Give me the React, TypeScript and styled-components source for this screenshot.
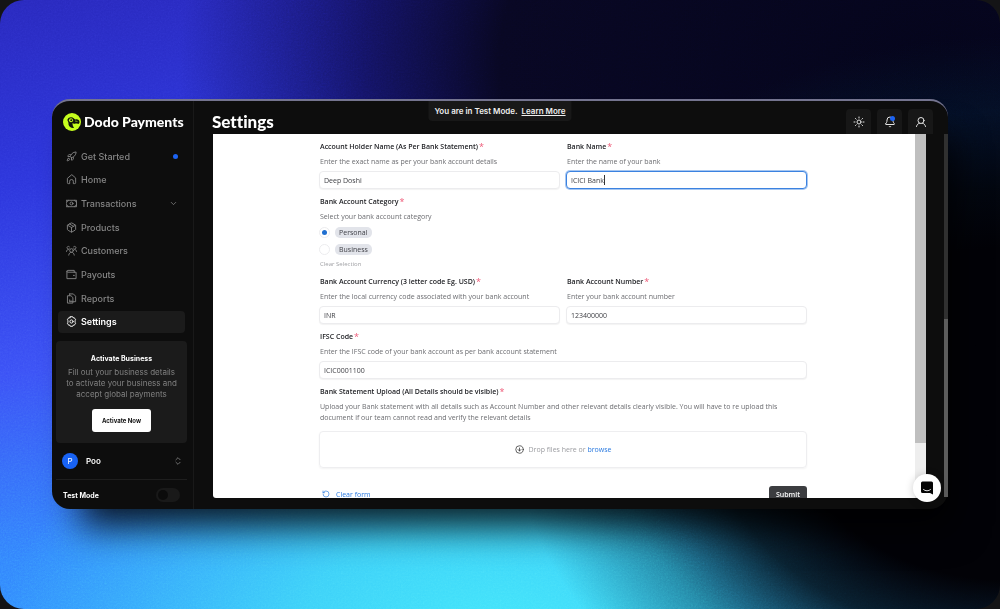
import React from "react";
import styled, { createGlobalStyle, css } from "styled-components";
import { Rocket, Package, ChevronDown, ChevronsUpDown, Sun, Bell, RotateCcw, CircleArrowDown } from "lucide-react";

const ui = `Inter, "Liberation Sans", sans-serif`;
const formFont = `"Open Sans", "Noto Sans", sans-serif`;

const GlobalStyle = createGlobalStyle`
  *, *::before, *::after { box-sizing: border-box; }
  body { margin: 0; background: #141416; font-family: ${ui}; }
  h1, h2, p, ul { margin: 0; padding: 0; }
  ul { list-style: none; }
  button, input { font: inherit; margin: 0; }
  button { cursor: pointer; border: 0; padding: 0; background: none; color: inherit; }
`;

const Wallpaper = styled.div`
  position: relative;
  height: 100vh;
  min-height: 609px;
  display: flex;
  padding: 99px 52px 100px;
  border-radius: 24px;
  overflow: hidden;
  background:
    radial-gradient(ellipse 50% 62% at 101% 68%, #010106 0%, #010106 44%, rgba(1, 6, 12, 0.85) 60%, rgba(2, 30, 50, 0.4) 80%, rgba(2, 40, 60, 0) 100%),
    radial-gradient(ellipse 50% 46% at 50% 104%, #42e6fb 0%, rgba(62, 216, 248, 0.9) 40%, rgba(50, 160, 250, 0) 100%),
    radial-gradient(ellipse 76% 80% at 94% 10%, #04041a 0%, #080722 58%, rgba(14, 12, 74, 0.8) 76%, rgba(34, 34, 170, 0) 100%),
    linear-gradient(172deg, #2828bc 0%, #2c35dc 25%, #3a50f6 50%, #3284fd 75%, #309cff 100%);
`;

const Grain = styled.svg`
  position: absolute;
  inset: 0;
  width: 100%;
  height: 100%;
  opacity: 0.3;
  mix-blend-mode: overlay;
`;

const Window = styled.div`
  position: relative;
  flex: 1;
  min-width: 0;
  display: flex;
  border-radius: 18px;
  border-top: 2px solid #74748f;
  background: #0d0d0d;
  box-shadow: 16px 30px 36px -12px rgba(0, 0, 0, 0.85);
`;

const Sidebar = styled.aside`
  width: 142px;
  flex: none;
  display: flex;
  flex-direction: column;
  padding: 12px 6px 0 4px;
  border-right: 1px solid #191919;
`;

const Brand = styled.a`
  display: flex;
  align-items: center;
  gap: 3px;
  height: 18px;
  padding-left: 7px;
  color: #fff;
  text-decoration: none;
  white-space: nowrap;
  font: 900 14px/18px Lato, sans-serif;
  svg { flex: none; }
`;

const Nav = styled.ul`
  display: flex;
  flex-direction: column;
  justify-content: space-between;
  flex: none;
  height: 188px;
  margin: 14px 2px 0;
`;

const NavLink = styled.a<{ $active?: boolean }>`
  display: flex;
  align-items: center;
  gap: 4px;
  height: 22px;
  padding: 0 7px 0 8px;
  border-radius: 4px;
  text-decoration: none;
  font-size: 9px;
  font-weight: ${(p) => (p.$active ? 600 : 500)};
  color: ${(p) => (p.$active ? "#fff" : "#858585")};
  background: ${(p) => (p.$active ? "#1b1b1b" : "transparent")};
  svg { flex: none; }
`;

const NavText = styled.span`
  flex: 1;
`;

const Dot = styled.span`
  width: 5px;
  height: 5px;
  border-radius: 50%;
  background: #1c63f2;
`;

const PromoCard = styled.section`
  display: flex;
  flex-direction: column;
  align-items: center;
  flex: none;
  margin-top: 8px;
  padding: 12px 8px 11px;
  border-radius: 4px;
  background: #1b1b1b;
  text-align: center;
`;

const PromoTitle = styled.h2`
  font-size: 7px;
  line-height: 11px;
  font-weight: 700;
  color: #fff;
`;

const PromoText = styled.p`
  margin-top: 3px;
  font-size: 8px;
  line-height: 11px;
  color: #808080;
  white-space: nowrap;
`;

const PromoButton = styled.button`
  margin-top: 9px;
  height: 23px;
  padding: 0 10px;
  border-radius: 3px;
  background: #fff;
  color: #111;
  font-size: 6px;
  font-weight: 700;
  white-space: nowrap;
`;

const Account = styled.button`
  display: flex;
  align-items: center;
  gap: 8px;
  height: 36px;
  flex: none;
  padding: 0 4px 0 6px;
  color: #fff;
  font-size: 8px;
  font-weight: 600;
  text-align: left;
`;

const Avatar = styled.span`
  width: 16px;
  height: 16px;
  border-radius: 50%;
  background: #1863f5;
  font-size: 8px;
  line-height: 16px;
  font-weight: 400;
  text-align: center;
`;

const ModeRow = styled.label`
  display: flex;
  align-items: center;
  justify-content: space-between;
  height: 31px;
  flex: none;
  padding: 0 7px;
  border-top: 1px solid #1e1e1e;
  color: #fff;
  font-size: 7px;
  font-weight: 700;
`;

const Toggle = styled.input`
  appearance: none;
  display: flex;
  align-items: center;
  width: 24px;
  height: 14px;
  padding: 0 2px;
  border-radius: 7px;
  background: #191919;
  &::before {
    content: "";
    width: 10px;
    height: 10px;
    border-radius: 50%;
    background: #0b0b0b;
  }
`;

const Main = styled.main`
  flex: 1;
  min-width: 0;
  display: flex;
  flex-direction: column;
  padding: 0 15px 11px 18px;
`;

const Header = styled.header`
  display: flex;
  align-items: flex-end;
  justify-content: space-between;
  height: 33px;
  flex: none;
`;

const Title = styled.h1`
  color: #fff;
  font: 900 17px/24px Lato, sans-serif;
  font-variant-ligatures: none;
`;

const Tools = styled.div`
  display: flex;
  gap: 6px;
`;

const Tool = styled.button`
  position: relative;
  display: grid;
  place-items: center;
  width: 25px;
  height: 25px;
  border-radius: 4px 4px 0 0;
  background: #171717;
  color: #e4e4e4;
`;

const Alert = styled.span`
  position: absolute;
  top: 7px;
  right: 7px;
  width: 5px;
  height: 5px;
  border-radius: 50%;
  background: #1c63f2;
`;

const Banner = styled.div`
  position: absolute;
  top: 0;
  left: 50%;
  transform: translateX(-50%);
  height: 20px;
  padding: 0 6px;
  border-radius: 0 0 4px 4px;
  background: #181818;
  color: #eee;
  font-size: 8px;
  line-height: 20px;
  font-weight: 600;
  white-space: nowrap;
  a { color: inherit; margin-left: 2px; text-underline-offset: 1px; }
`;

const Panel = styled.div`
  flex: 1;
  min-height: 0;
  display: flex;
  margin: 0 7px 0 1px;
  overflow: hidden;
  border-radius: 0 0 0 3px;
  background: #fff;
`;

const PanelBody = styled.div`
  flex: 1;
  min-width: 0;
  overflow: hidden;
  padding: 8px 34px 0 32px;
`;

const PanelTrack = styled.div`
  width: 11px;
  flex: none;
  display: flex;
  align-items: flex-start;
  background: #eee;
  &::before {
    content: "";
    width: 100%;
    height: 85%;
    background: #bfbfbf;
  }
`;

const WindowTrack = styled.div`
  position: absolute;
  top: 33px;
  right: 0;
  bottom: 12px;
  width: 4px;
  display: flex;
  align-items: flex-end;
  background: #303030;
  &::before {
    content: "";
    width: 100%;
    height: 49%;
    background: #5c5c5c;
  }
`;

const Form = styled.form`
  max-width: 488px;
  margin: 0 auto;
  display: flex;
  flex-direction: column;
  gap: 8px;
  color: #38393d;
  font-family: ${formFont};
  font-size: 7px;
`;

const Columns = styled.div`
  display: grid;
  grid-template-columns: 1fr 1fr;
  gap: 6px;
`;

const Field = styled.div`
  display: flex;
  flex-direction: column;
  min-width: 0;
`;

const Group = styled.fieldset`
  display: flex;
  flex-direction: column;
  align-items: flex-start;
  margin: 0;
  padding: 0;
  border: 0;
`;

const labelText = css`
  display: flex;
  padding: 0 0 0 1px;
  font-size: 7px;
  line-height: 10px;
  font-weight: 600;
  color: #222327;
  white-space: nowrap;
`;

const Label = styled.label`
  ${labelText}
`;

const Legend = styled.legend`
  ${labelText}
`;

const Star = styled.span`
  margin-left: 1px;
  color: #ee5a78;
  font-size: 9px;
  line-height: 9px;
  font-weight: 400;
`;

const Hint = styled.p`
  margin: 4px 0;
  padding-left: 1px;
  line-height: 11px;
  color: #6c6d71;
`;

const UploadHint = styled(Hint)`
  margin-bottom: 0;
`;

const InputWrap = styled.div`
  position: relative;
  display: flex;
`;

const Input = styled.input<{ $focused?: boolean }>`
  width: 100%;
  height: 18px;
  padding: 0 4px;
  border: 1px solid ${(p) => (p.$focused ? "#3b82e0" : "#ececee")};
  border-radius: 4px;
  outline: 0;
  background: #fff;
  box-shadow: ${(p) => (p.$focused ? "0 0 0 1px rgba(59, 130, 224, 0.45)" : "0 1px 1px rgba(0, 0, 0, 0.05)")};
  color: #3c3d42;
`;

const Caret = styled.span`
  position: absolute;
  left: 38px;
  top: 4px;
  width: 1px;
  height: 10px;
  background: #333;
`;

const Choice = styled.label`
  display: flex;
  align-items: center;
  gap: 5px;
  height: 12px;
  margin-bottom: 5px;
`;

const Radio = styled.input`
  appearance: none;
  display: grid;
  place-items: center;
  width: 11px;
  height: 11px;
  border: 1px solid #ececee;
  border-radius: 50%;
  background: #fff;
  &:checked::before {
    content: "";
    width: 5px;
    height: 5px;
    border-radius: 50%;
    background: #1f6fd0;
  }
`;

const Pill = styled.span`
  padding: 0 4px;
  border-radius: 5px;
  background: #e2e4ea;
  line-height: 11px;
  color: #3e3f45;
`;

const ClearSelection = styled.button`
  padding-left: 1px;
  line-height: 9px;
  font-size: 6px;
  color: #a0a1a5;
`;

const DropZone = styled.div`
  display: flex;
  align-items: center;
  justify-content: center;
  gap: 5px;
  height: 37px;
  border: 1px solid #eeeef0;
  border-radius: 4px;
  box-shadow: 0 1px 2px rgba(0, 0, 0, 0.05);
  color: #9b9ca0;
  a { color: #2a7ae0; text-decoration: none; }
  svg { color: #333; }
`;

const Actions = styled.div`
  display: flex;
  align-items: center;
  justify-content: space-between;
  margin-top: 10px;
`;

const ClearForm = styled.button`
  display: flex;
  align-items: center;
  gap: 6px;
  padding-left: 3px;
  color: #2a7ae0;
`;

const Submit = styled.button`
  height: 16px;
  padding: 0 7px;
  border-radius: 3px;
  background: #3c3d40;
  color: #fff;
  font-weight: 600;
`;

const ChatButton = styled.button`
  position: absolute;
  right: 7px;
  bottom: 7px;
  display: grid;
  place-items: center;
  width: 28px;
  height: 28px;
  border-radius: 50%;
  background: #fff;
  box-shadow: 0 1px 8px rgba(0, 0, 0, 0.2);
`;

const DodoMark = () => (
  <svg width="18" height="18" viewBox="0 0 36 36" aria-hidden="true">
    <circle cx="18" cy="18" r="18" fill="#c6fe1e" />
    <path d="M9 13c2-5 9-6 13-2 1 1 2 2 3 2 4-1 8 1 8 5 0 2-1 3-2 4-2-1-4-1-6-1-3 1-5 0-6-1 0 4 1 7 3 10-5 1-10-2-11-7 0-3 0-4-1-6-1-1-1-2-1-4z" fill="#10140a" />
    <circle cx="16" cy="14.500" r="4" fill="#c6fe1e" />
    <circle cx="16.500" cy="14.500" r="2" fill="#10140a" />
    <path d="M24 16l5 1" stroke="#c6fe1e" strokeWidth="1.200" />
  </svg>
);

const LineIcon = ({ children }: { children: React.ReactNode }) => (
  <svg width="11" height="11" viewBox="0 0 24 24" fill="none" stroke="currentColor" strokeWidth="2" strokeLinecap="round" strokeLinejoin="round" aria-hidden="true">
    {children}
  </svg>
);

const RocketIcon = () => <Rocket size={11} />;
const BoxIcon = () => <Package size={11} />;

const HomeIcon = () => (
  <LineIcon>
    <path d="M12 2 3 9.500V19a2 2 0 0 0 2 2h3v-5a4 4 0 0 1 8 0v5h3a2 2 0 0 0 2-2V9.500z" />
  </LineIcon>
);

const CashIcon = () => (
  <LineIcon>
    <path d="M1 5h22v14H1z" />
    <circle cx="12" cy="12" r="3.200" />
    <path d="M1 9c2 0 3.500-1.500 4-4M1 15c2 0 3.500 1.500 4 4M23 9c-2 0-3.500-1.500-4-4M23 15c-2 0-3.500 1.500-4 4" />
  </LineIcon>
);

const PeopleIcon = () => (
  <LineIcon>
    <circle cx="12" cy="12" r="4" />
    <path d="M6 22c.500-3.500 2.500-6 6-6s5.500 2.500 6 6M1 14c.300-2.500 1.500-4 4-4M23 14c-.300-2.500-1.500-4-4-4" />
    <path d="M7 8.500A3 3 0 1 1 7.500 4M17 8.500A3 3 0 1 0 16.500 4" />
  </LineIcon>
);

const WalletIcon = () => (
  <LineIcon>
    <path d="M18 7V3H4a2 2 0 0 0 0 4h18v14H2V5" />
    <path d="M17 14h.5" strokeWidth="3" />
  </LineIcon>
);

const ReportIcon = () => (
  <LineIcon>
    <path d="M8 2h8l5 5v12H8" />
    <path d="M8 2v3M4 6h7l4 4v12H4z" />
    <path d="M8 18v-3M11 18v-1" />
  </LineIcon>
);

const GearIcon = () => (
  <LineIcon>
    <circle cx="12" cy="12" r="3.500" />
    <path d="M9.500 1.500h5l1 2.500 2.600-.2 2.900 4.500-1.200 1.900v3.600l1.200 1.900-2.900 4.500-2.600-.2-1 2.500h-5l-1-2.500-2.600.2L3 15.700l1.200-1.900v-3.600L3 8.300l2.900-4.500 2.600.2z" />
  </LineIcon>
);

const PersonIcon = () => (
  <svg width="12" height="12" viewBox="0 0 24 24" fill="none" stroke="currentColor" strokeWidth="2" strokeLinecap="round" aria-hidden="true">
    <circle cx="12" cy="9" r="6" />
    <path d="M3 21c1-4 3-6 6-6.500M21 21c-1-4-3-6-6-6.500" />
  </svg>
);

const ChatIcon = () => (
  <svg width="14" height="16" viewBox="0 0 28 32" aria-hidden="true">
    <path d="M5 3h18a3 3 0 0 1 3 3v23l-6-3H5a3 3 0 0 1-3-3V6a3 3 0 0 1 3-3z" fill="#050505" />
    <path d="M7 19c4 3.500 10 3.500 14 0" stroke="#fff" strokeWidth="1.800" fill="none" strokeLinecap="round" />
  </svg>
);

const items = [
  { text: "Get Started", icon: RocketIcon, dot: true },
  { text: "Home", icon: HomeIcon },
  { text: "Transactions", icon: CashIcon, expand: true },
  { text: "Products", icon: BoxIcon },
  { text: "Customers", icon: PeopleIcon },
  { text: "Payouts", icon: WalletIcon },
  { text: "Reports", icon: ReportIcon },
  { text: "Settings", icon: GearIcon, active: true },
];

type TextFieldProps = { id: string; label: string; hint: string; value: string; focused?: boolean };

const TextField = ({ id, label, hint, value, focused }: TextFieldProps) => (
  <Field>
    <Label htmlFor={id}>{label}<Star>*</Star></Label>
    <Hint>{hint}</Hint>
    <InputWrap>
      <Input id={id} defaultValue={value} $focused={focused} />
      {focused && <Caret />}
    </InputWrap>
  </Field>
);

export default function App() {
  return (
    <>
      <GlobalStyle />
      <Wallpaper>
        <Grain aria-hidden="true">
          <filter id="grain">
            <feTurbulence type="fractalNoise" baseFrequency="0.6" numOctaves="2" />
            <feColorMatrix type="saturate" values="0" />
          </filter>
          <rect width="100%" height="100%" filter="url(#grain)" />
        </Grain>
        <Window>
          <Sidebar>
            <Brand href="#"><DodoMark />Dodo Payments</Brand>
            <Nav>
              {items.map(({ text, icon: Icon, dot, expand, active }) => (
                <li key={text}>
                  <NavLink href="#" $active={active}>
                    <Icon />
                    <NavText>{text}</NavText>
                    {dot && <Dot />}
                    {expand && <ChevronDown size={9} />}
                  </NavLink>
                </li>
              ))}
            </Nav>
            <PromoCard>
              <PromoTitle>Activate Business</PromoTitle>
              <PromoText>Fill out your business details<br />to activate your business and<br />accept global payments</PromoText>
              <PromoButton type="button">Activate Now</PromoButton>
            </PromoCard>
            <Account type="button">
              <Avatar>P</Avatar>
              <NavText>Poo</NavText>
              <ChevronsUpDown size={10} color="#808080" />
            </Account>
            <ModeRow>Test Mode<Toggle type="checkbox" role="switch" /></ModeRow>
          </Sidebar>
          <Main>
            <Header>
              <Title>Settings</Title>
              <Tools>
                <Tool type="button" aria-label="Theme"><Sun size={12} /></Tool>
                <Tool type="button" aria-label="Notifications"><Bell size={12} /><Alert /></Tool>
                <Tool type="button" aria-label="Profile"><PersonIcon /></Tool>
              </Tools>
            </Header>
            <Panel>
              <PanelBody>
                <Form onSubmit={(e) => e.preventDefault()}>
                  <Columns>
                    <TextField id="holder" label="Account Holder Name (As Per Bank Statement)" hint="Enter the exact name as per your bank account details" value="Deep Doshi" />
                    <TextField id="bank" label="Bank Name" hint="Enter the name of your bank" value="ICICI Bank" focused />
                  </Columns>
                  <Group>
                    <Legend>Bank Account Category<Star>*</Star></Legend>
                    <Hint>Select your bank account category</Hint>
                    <Choice><Radio type="radio" name="category" defaultChecked /><Pill>Personal</Pill></Choice>
                    <Choice><Radio type="radio" name="category" /><Pill>Business</Pill></Choice>
                    <ClearSelection type="button">Clear Selection</ClearSelection>
                  </Group>
                  <Columns>
                    <TextField id="currency" label="Bank Account Currency (3 letter code Eg. USD)" hint="Enter the local currency code associated with your bank account" value="INR" />
                    <TextField id="number" label="Bank Account Number" hint="Enter your bank account number" value="123400000" />
                  </Columns>
                  <TextField id="ifsc" label="IFSC Code" hint="Enter the IFSC code of your bank account as per bank account statement" value="ICIC0001100" />
                  <Field>
                    <Label as="span">Bank Statement Upload (All Details should be visible)<Star>*</Star></Label>
                    <UploadHint>Upload your Bank statement with all details such as Account Number and other relevant details clearly visible. You will have to re upload this document if our team cannot read and verify the relevant details</UploadHint>
                  </Field>
                  <DropZone>
                    <CircleArrowDown size={9} />
                    <span>Drop files here or <a href="#">browse</a></span>
                  </DropZone>
                  <Actions>
                    <ClearForm type="reset"><RotateCcw size={8} />Clear form</ClearForm>
                    <Submit type="submit">Submit</Submit>
                  </Actions>
                </Form>
              </PanelBody>
              <PanelTrack />
            </Panel>
          </Main>
          <Banner>You are in Test Mode. <a href="#">Learn More</a></Banner>
          <WindowTrack />
          <ChatButton type="button" aria-label="Open chat"><ChatIcon /></ChatButton>
        </Window>
      </Wallpaper>
    </>
  );
}
